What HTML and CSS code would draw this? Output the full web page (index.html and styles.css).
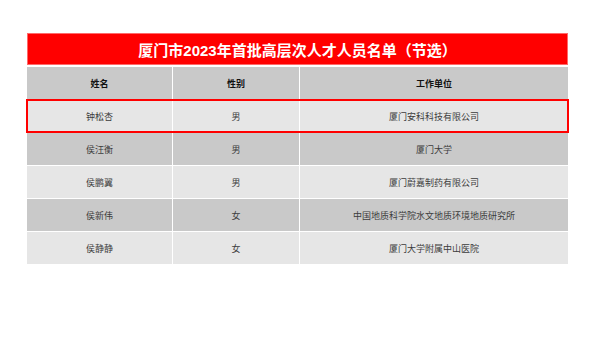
FILE: index.html
```html
<!DOCTYPE html>
<html lang="zh-CN">
<head>
    <meta charset="UTF-8">
    <meta name="viewport" content="width=device-width, initial-scale=1.0">
    <title>厦门市2023年首批高层次人才人员名单（节选）</title>
    <link rel="stylesheet" href="styles.css">
</head>
<body>
    <main class="sheet">
        <div class="sheet-title">厦门市2023年首批高层次人才人员名单（节选）</div>
        <table class="roster">
            <colgroup>
                <col class="col-name">
                <col class="col-sex">
                <col class="col-unit">
            </colgroup>
            <thead>
                <tr>
                    <th>姓名</th>
                    <th>性别</th>
                    <th>工作单位</th>
                </tr>
            </thead>
            <tbody>
                <tr class="highlight">
                    <td>钟松杏</td>
                    <td>男</td>
                    <td>厦门安科科技有限公司</td>
                </tr>
                <tr>
                    <td>侯汪衡</td>
                    <td>男</td>
                    <td>厦门大学</td>
                </tr>
                <tr>
                    <td>侯鹏翼</td>
                    <td>男</td>
                    <td>厦门蔚嘉制药有限公司</td>
                </tr>
                <tr>
                    <td>侯新伟</td>
                    <td>女</td>
                    <td>中国地质科学院水文地质环境地质研究所</td>
                </tr>
                <tr>
                    <td>侯静静</td>
                    <td>女</td>
                    <td>厦门大学附属中山医院</td>
                </tr>
            </tbody>
        </table>
    </main>
</body>
</html>
```

FILE: styles.css
```css
:root {
    --title-red: #ff0000;
    --row-dark: #c9c9c9;
    --row-light: #e6e6e6;
    --line-color: #ededed;
    --text-color: #3c3c3c;
}

* {
    margin: 0;
    padding: 0;
    box-sizing: border-box;
}

body {
    font-family: "Liberation Sans", "Noto Sans CJK SC", sans-serif;
    background-color: #fff;
    color: var(--text-color);
    width: 600px;
    height: 337px;
    overflow: hidden;
}

.sheet {
    width: 541px;
    margin: 33px 0 0 27px;
}

.sheet-title {
    height: 32px;
    background-color: var(--title-red);
    border: 1px solid #ff6a6a;
    color: #fff;
    font-size: 15px;
    font-weight: bold;
    display: flex;
    align-items: center;
    justify-content: center;
    margin-bottom: 1px;
}

.roster {
    width: 100%;
    border-collapse: separate;
    border-spacing: 1px;
    margin: 0 -1px;
    width: calc(100% + 2px);
    table-layout: fixed;
    font-size: 9px;
}

.col-name { width: 145px; }
.col-sex { width: 126px; }

.roster th,
.roster td {
    height: 32px;
    text-align: center;
    vertical-align: middle;
}

.roster th {
    background-color: var(--row-dark);
    color: #111;
    font-weight: bold;
}

.roster tbody tr:nth-child(odd) td {
    background-color: var(--row-light);
}

.roster tbody tr:nth-child(even) td {
    background-color: var(--row-dark);
}

.roster tr.highlight {
    outline: 2px solid var(--title-red);
    outline-offset: -1px;
}
```
